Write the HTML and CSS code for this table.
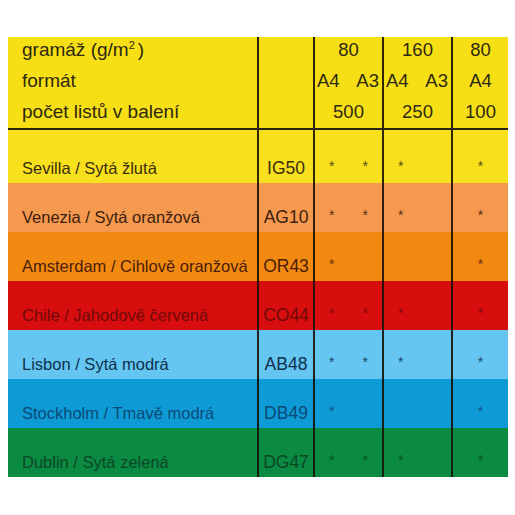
FILE: index.html
```html
<!DOCTYPE html>
<html>
<head>
  <meta charset="UTF-8">
  <title>Barevné papíry</title>
  <link rel="stylesheet" href="styles.css">
</head>
<body>
  <div class="table">
    <div class="row head">
      <div class="cell first">
        <div class="line">gramáž (g/m<sup>2</sup>)</div>
        <div class="line">formát</div>
        <div class="line">počet listů v balení</div>
      </div>
      <div class="cell"></div>
      <div class="cell num">
        <div class="line">80</div>
        <div class="line split"><span>A4</span><span>A3</span></div>
        <div class="line">500</div>
      </div>
      <div class="cell num">
        <div class="line">160</div>
        <div class="line split"><span>A4</span><span>A3</span></div>
        <div class="line">250</div>
      </div>
      <div class="cell num">
        <div class="line">80</div>
        <div class="line">A4</div>
        <div class="line">100</div>
      </div>
    </div>

    <div class="row paper sevilla tall">
      <div class="cell name">Sevilla / Sytá žlutá</div>
      <div class="cell code">IG50</div>
      <div class="cell pair"><span>*</span><span>*</span></div>
      <div class="cell pair"><span>*</span><span></span></div>
      <div class="cell one"><span>*</span></div>
    </div>

    <div class="row paper venezia">
      <div class="cell name">Venezia / Sytá oranžová</div>
      <div class="cell code">AG10</div>
      <div class="cell pair"><span>*</span><span>*</span></div>
      <div class="cell pair"><span>*</span><span></span></div>
      <div class="cell one"><span>*</span></div>
    </div>

    <div class="row paper amsterdam">
      <div class="cell name">Amsterdam / Cihlově oranžová</div>
      <div class="cell code">OR43</div>
      <div class="cell pair"><span>*</span><span></span></div>
      <div class="cell pair"><span></span><span></span></div>
      <div class="cell one"><span>*</span></div>
    </div>

    <div class="row paper chile">
      <div class="cell name">Chile / Jahodově červená</div>
      <div class="cell code">CO44</div>
      <div class="cell pair"><span>*</span><span>*</span></div>
      <div class="cell pair"><span>*</span><span></span></div>
      <div class="cell one"><span>*</span></div>
    </div>

    <div class="row paper lisbon">
      <div class="cell name">Lisbon / Sytá modrá</div>
      <div class="cell code">AB48</div>
      <div class="cell pair"><span>*</span><span>*</span></div>
      <div class="cell pair"><span>*</span><span></span></div>
      <div class="cell one"><span>*</span></div>
    </div>

    <div class="row paper stockholm">
      <div class="cell name">Stockholm / Tmavě modrá</div>
      <div class="cell code">DB49</div>
      <div class="cell pair"><span>*</span><span></span></div>
      <div class="cell pair"><span></span><span></span></div>
      <div class="cell one"><span>*</span></div>
    </div>

    <div class="row paper dublin">
      <div class="cell name">Dublin / Sytá zelená</div>
      <div class="cell code">DG47</div>
      <div class="cell pair"><span>*</span><span>*</span></div>
      <div class="cell pair"><span>*</span><span></span></div>
      <div class="cell one"><span>*</span></div>
    </div>
  </div>
</body>
</html>
```

FILE: styles.css
```css
body {
  margin: 0;
  padding: 37px 7px 0 8px;
  background-color: #fff;
  font-family: "Liberation Sans", Arial, Helvetica, sans-serif;
}

.table {
  width: 500px;
}

.row {
  display: grid;
  grid-template-columns: 249px 56px 69px 69px 57px;
}

.cell + .cell {
  border-left: 2px solid rgba(25, 18, 5, 0.9);
}

/* hlavička */

.head {
  height: 91px;
  background-color: #f7df16;
  color: #2e2810;
  border-bottom: 2px solid #2a2612;
}

.head .cell {
  display: flex;
  flex-direction: column;
  overflow: hidden;
}

.head .line {
  height: 31px;
  line-height: 31px;
  flex-shrink: 0;
}

.head .line:first-child {
  margin-top: -3px;
}

.head .first {
  padding-left: 14px;
  font-size: 19px;
}

.head sup {
  font-size: 11px;
  line-height: 0;
  margin-right: 3px;
}

.head .num {
  font-size: 18.5px;
  text-align: center;
}

.head .split {
  display: flex;
  justify-content: space-between;
  padding: 0 3px 0 2px;
}

/* barvy */

.paper {
  height: 49px;
  font-size: 16.5px;
  line-height: 19px;
}

.paper.tall {
  height: 53px;
}

.paper .cell {
  display: flex;
  align-items: flex-end;
  padding-bottom: 5px;
}

.paper .name {
  padding-left: 14px;
  white-space: nowrap;
}

.paper .code {
  justify-content: center;
  font-size: 17.5px;
}

.paper .pair span,
.paper .one span {
  flex: 1;
  text-align: center;
  font-size: 14px;
  padding-bottom: 2px;
  opacity: 0.85;
}

.sevilla {
  background-color: #f8e01c;
  color: #3a2e10;
}

.venezia {
  background-color: #f4994e;
  color: #3c1d0e;
}

.amsterdam {
  background-color: #f28a12;
  color: #4a1d08;
}

.chile {
  background-color: #d80d0e;
  color: #700a08;
}

.lisbon {
  background-color: #64c6f1;
  color: #10304c;
}

.stockholm {
  background-color: #0e9bd5;
  color: #0b4a78;
}

.dublin {
  background-color: #0b8a42;
  color: #0a4824;
}
```
